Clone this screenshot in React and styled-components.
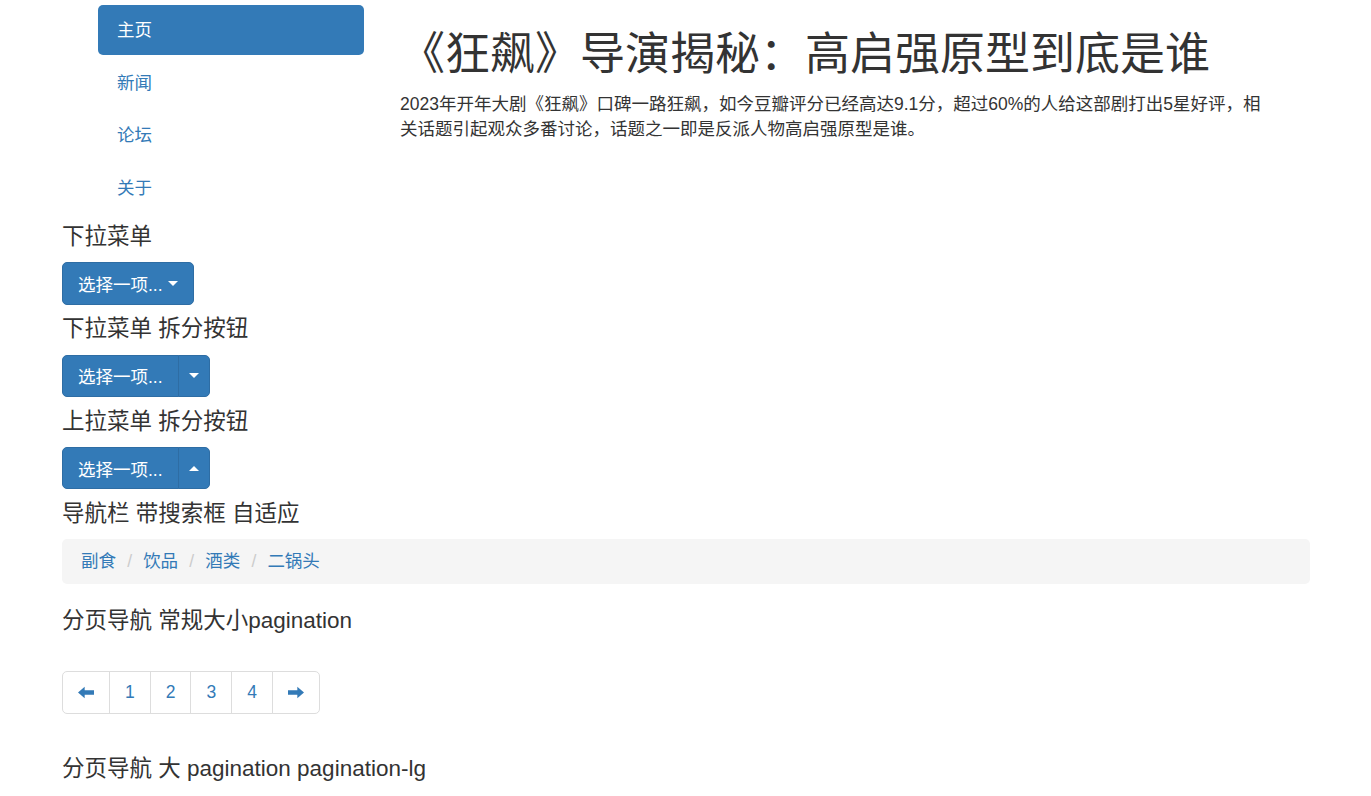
import styled, { createGlobalStyle } from "styled-components";

const GlobalStyle = createGlobalStyle`
  body {
    margin: 0;
    font-family: "Liberation Sans", "Noto Sans CJK SC", sans-serif;
    font-size: 17.5px;
    line-height: 1.42857;
    color: #333;
    background: #fff;
  }
  * { box-sizing: border-box; }
`;

const Page = styled.div`
  padding: 5px 0 0 62px;
  width: 1310px;
`;

const TopRow = styled.div`
  display: grid;
  grid-template-columns: 266px 875px;
  column-gap: 36px;
  padding-left: 36px;
`;

const NavList = styled.ul`
  list-style: none;
  margin: 0;
  padding: 0;
`;

const NavItem = styled.li`
  & + & {
    margin-top: 2.5px;
  }
`;

const NavLink = styled.a`
  display: block;
  padding: 15px 19px;
  line-height: 20px;
  font-size: 17.5px;
  border-radius: 5px;
  text-decoration: none;
  color: ${(p) => (p.$active ? "#fff" : "#337ab7")};
  background: ${(p) => (p.$active ? "#337ab7" : "transparent")};
`;

const Main = styled.div``;

const Title = styled.h1`
  margin: 25px 0 12.5px;
  font-size: 45px;
  font-weight: 400;
  line-height: 1.1;
  color: #333;
`;

const Lead = styled.p`
  margin: 0 0 12.5px;
  font-size: 17.5px;
  line-height: 25px;
`;

const Heading = styled.h4`
  margin: 12.5px 0;
  font-size: 22.5px;
  font-weight: 400;
  line-height: 1.1;
`;

const BtnGroup = styled.div`
  display: inline-flex;
  vertical-align: middle;
`;

const Btn = styled.button`
  display: inline-flex;
  align-items: center;
  height: 42.5px;
  padding: 0 ${(p) => (p.$caretOnly ? "10px" : "15px")};
  font-family: inherit;
  font-size: 17.5px;
  color: #fff;
  background: #337ab7;
  border: 1px solid #2e6da4;
  border-radius: 5px;
  cursor: pointer;

  ${BtnGroup} > &:not(:last-child) {
    border-top-right-radius: 0;
    border-bottom-right-radius: 0;
  }
  ${BtnGroup} > &:not(:first-child) {
    border-top-left-radius: 0;
    border-bottom-left-radius: 0;
    margin-left: -1px;
  }
`;

const Caret = styled.span`
  display: inline-block;
  width: 0;
  height: 0;
  margin-left: ${(p) => (p.$inline ? "5px" : "0")};
  border-left: 5px solid transparent;
  border-right: 5px solid transparent;
  ${(p) => (p.$up ? "border-bottom: 5px solid #fff;" : "border-top: 5px solid #fff;")}
`;

const Crumbs = styled.ol`
  display: flex;
  gap: 4.9px;
  list-style: none;
  margin: 0 0 25px;
  padding: 10px 19px;
  width: 1248px;
  height: 45px;
  align-items: center;
  background: #f5f5f5;
  border-radius: 5px;
`;

const Crumb = styled.li`
  & + &::before {
    content: "/\\00a0";
    padding: 0 6.25px;
    color: #ccc;
  }
  a {
    color: #337ab7;
    text-decoration: none;
  }
`;

const PagerWrap = styled.nav`
  padding: 25px 0 31px;
`;

const Pager = styled.ul`
  display: inline-flex;
  list-style: none;
  margin: 0;
  padding: 0;
`;

const PageItem = styled.li`
  & + & {
    margin-left: -1px;
  }
  a {
    display: flex;
    align-items: center;
    justify-content: center;
    height: 42.5px;
    padding: 0 15px;
    ${(p) => (p.$arrow ? "width: 48px;" : "")}
    color: #337ab7;
    text-decoration: none;
    background: #fff;
    border: 1px solid #ddd;
  }
  &:first-child a {
    border-radius: 5px 0 0 5px;
  }
  &:last-child a {
    border-radius: 0 5px 5px 0;
  }
`;

const Arrow = ({ dir }) => (
  <svg width="18" height="13" viewBox="0 0 18 13" fill="#337ab7">
    {dir === "left" ? (
      <path d="M0 6.5 L7.5 0 L7.5 4 L18 4 L18 9 L7.5 9 L7.5 13 Z" />
    ) : (
      <path d="M18 6.5 L10.5 0 L10.5 4 L0 4 L0 9 L10.5 9 L10.5 13 Z" />
    )}
  </svg>
);

const navItems = ["主页", "新闻", "论坛", "关于"];
const crumbs = ["副食", "饮品", "酒类", "二锅头"];

export default function App() {
  return (
    <>
      <GlobalStyle />
      <Page>
        <TopRow>
          <NavList>
            {navItems.map((n, i) => (
              <NavItem key={n}>
                <NavLink href="#" $active={i === 0}>
                  {n}
                </NavLink>
              </NavItem>
            ))}
          </NavList>
          <Main>
            <Title>《狂飙》导演揭秘：高启强原型到底是谁</Title>
            <Lead>
              2023年开年大剧《狂飙》口碑一路狂飙，如今豆瓣评分已经高达9.1分，超过60%的人给这部剧打出5星好评，相关话题引起观众多番讨论，话题之一即是反派人物高启强原型是谁。
            </Lead>
          </Main>
        </TopRow>

        <Heading>下拉菜单</Heading>
        <BtnGroup>
          <Btn>
            选择一项...
            <Caret $inline />
          </Btn>
        </BtnGroup>

        <Heading>下拉菜单 拆分按钮</Heading>
        <BtnGroup>
          <Btn>选择一项...</Btn>
          <Btn $caretOnly>
            <Caret />
          </Btn>
        </BtnGroup>

        <Heading>上拉菜单 拆分按钮</Heading>
        <BtnGroup>
          <Btn>选择一项...</Btn>
          <Btn $caretOnly>
            <Caret $up />
          </Btn>
        </BtnGroup>

        <Heading>导航栏 带搜索框 自适应</Heading>
        <Crumbs>
          {crumbs.map((c) => (
            <Crumb key={c}>
              <a href="#">{c}</a>
            </Crumb>
          ))}
        </Crumbs>

        <Heading>分页导航 常规大小pagination</Heading>
        <PagerWrap>
          <Pager>
            <PageItem $arrow>
              <a href="#">
                <Arrow dir="left" />
              </a>
            </PageItem>
            {[1, 2, 3, 4].map((n) => (
              <PageItem key={n}>
                <a href="#">{n}</a>
              </PageItem>
            ))}
            <PageItem $arrow>
              <a href="#">
                <Arrow dir="right" />
              </a>
            </PageItem>
          </Pager>
        </PagerWrap>

        <Heading>分页导航 大 pagination pagination-lg</Heading>
      </Page>
    </>
  );
}
